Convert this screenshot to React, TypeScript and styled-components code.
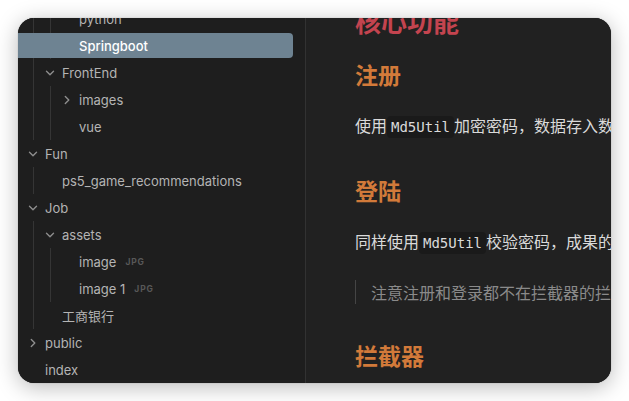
import React from 'react';
import styled, { createGlobalStyle } from 'styled-components';

const Global = createGlobalStyle`
  html, body { margin: 0; padding: 0; background: #ffffff; }
  body { font-family: Inter, "Noto Sans CJK SC", sans-serif; -webkit-font-smoothing: antialiased; }
`;

const Stage = styled.div`
  width: 629px;
  height: 401px;
  padding: 18px;
  box-sizing: border-box;
  background: #ffffff;
`;

const Window = styled.div`
  width: 593px;
  height: 365px;
  border-radius: 16px;
  overflow: hidden;
  display: flex;
  background: #212121;
  box-shadow: 0 4px 22px rgba(0, 0, 0, 0.28), 0 0 1px rgba(0, 0, 0, 0.4);
`;

const Sidebar = styled.nav`
  width: 287px;
  flex: none;
  background: #1e1e1e;
  border-right: 1px solid #323232;
  overflow: hidden;
`;

const Tree = styled.div`
  margin-top: -13px;
  display: flex;
  flex-direction: column;
`;

const Group = styled.div<{ $guide: number }>`
  position: relative;
  display: flex;
  flex-direction: column;
  &::before {
    content: '';
    position: absolute;
    left: ${(p) => p.$guide}px;
    top: 0;
    bottom: 0;
    width: 1px;
    background: #353535;
  }
`;

const Row = styled.div<{ $depth: number; $active?: boolean }>`
  position: relative;
  height: 25px;
  margin: 1px 12px 1px 0;
  display: flex;
  align-items: center;
  padding-left: ${(p) => 7 + 17 * p.$depth}px;
  border-radius: 0 4px 4px 0;
  background: ${(p) => (p.$active ? '#6e8392' : 'transparent')};
  color: ${(p) => (p.$active ? '#ffffff' : '#b4b4b4')};
  font-size: 13px;
  font-weight: ${(p) => (p.$active ? 500 : 400)};
  white-space: nowrap;
`;

const Caret = styled.span`
  width: 16px;
  height: 16px;
  flex: none;
  display: flex;
  align-items: center;
  justify-content: center;
  color: #8c8c8c;
  margin-right: 4px;
`;

const Tag = styled.span`
  margin-left: 9px;
  font-size: 8.5px;
  font-weight: 700;
  letter-spacing: 0.1em;
  color: #585858;
`;

const Editor = styled.main`
  flex: 1;
  min-width: 0;
  overflow: hidden;
  background: #212121;
`;

const Doc = styled.article`
  margin-top: -13px;
  padding-left: 49px;
  width: 640px;
  display: flex;
  flex-direction: column;
  font-family: "Noto Sans CJK SC", Inter, sans-serif;
  color: #dadada;
  white-space: nowrap;
`;

const H1 = styled.h1`
  margin: 0;
  font-size: 26px;
  line-height: 32px;
  font-weight: 700;
  color: #c4444f;
`;

const H2 = styled.h2`
  margin: 36px 0 0;
  font-size: 23px;
  line-height: 30px;
  font-weight: 700;
  color: #d27a3a;
  h1 + & {
    margin-top: 22px;
  }
`;

const P = styled.p`
  margin: 24px 0 0;
  font-size: 16px;
  line-height: 24px;
`;

const Code = styled.code`
  font-family: "DejaVu Sans Mono", "Liberation Mono", monospace;
  font-size: 14px;
  padding: 3px 4px;
  border-radius: 4px;
  background: #1a1a1a;
  color: #dadada;
`;

const Quote = styled.blockquote`
  margin: 25px 0 0;
  padding-left: 15px;
  border-left: 1px solid #454545;
  font-size: 16px;
  line-height: 24px;
  color: #8a8a8a;
`;

const Down = () => (
  <svg width="10" height="10" viewBox="0 0 10 10" fill="none">
    <path d="M1.5 3.2 L5 6.7 L8.5 3.2" stroke="currentColor" strokeWidth="1.4" strokeLinecap="round" strokeLinejoin="round" />
  </svg>
);

const Right = () => (
  <svg width="10" height="10" viewBox="0 0 10 10" fill="none">
    <path d="M3.3 1.5 L6.8 5 L3.3 8.5" stroke="currentColor" strokeWidth="1.4" strokeLinecap="round" strokeLinejoin="round" />
  </svg>
);

type ItemProps = {
  depth: number;
  label: string;
  caret?: 'open' | 'closed';
  active?: boolean;
  tag?: string;
};

const Item = ({ depth, label, caret, active, tag }: ItemProps) => (
  <Row $depth={depth} $active={active}>
    <Caret>{caret === 'open' ? <Down /> : caret === 'closed' ? <Right /> : null}</Caret>
    {label}
    {tag && <Tag>{tag}</Tag>}
  </Row>
);

export default function App() {
  return (
    <>
      <Global />
      <Stage>
        <Window>
          <Sidebar>
            <Tree>
              <Group $guide={15}>
                <Group $guide={32}>
                  <Item depth={2} label="python" />
                  <Item depth={2} label="Springboot" active />
                </Group>
                <Item depth={1} label="FrontEnd" caret="open" />
                <Group $guide={32}>
                  <Item depth={2} label="images" caret="closed" />
                  <Item depth={2} label="vue" />
                </Group>
              </Group>
              <Item depth={0} label="Fun" caret="open" />
              <Group $guide={15}>
                <Item depth={1} label="ps5_game_recommendations" />
              </Group>
              <Item depth={0} label="Job" caret="open" />
              <Group $guide={15}>
                <Item depth={1} label="assets" caret="open" />
                <Group $guide={32}>
                  <Item depth={2} label="image" tag="JPG" />
                  <Item depth={2} label="image 1" tag="JPG" />
                </Group>
                <Item depth={1} label="工商银行" />
              </Group>
              <Item depth={0} label="public" caret="closed" />
              <Item depth={0} label="index" />
            </Tree>
          </Sidebar>
          <Editor>
            <Doc>
              <H1>核心功能</H1>
              <H2>注册</H2>
              <P>
                使用<Code>Md5Util</Code>加密密码，数据存入数据库
              </P>
              <H2>登陆</H2>
              <P>
                同样使用<Code>Md5Util</Code>校验密码，成果的话返回
              </P>
              <Quote>注意注册和登录都不在拦截器的拦截范围内</Quote>
              <H2>拦截器</H2>
            </Doc>
          </Editor>
        </Window>
      </Stage>
    </>
  );
}
